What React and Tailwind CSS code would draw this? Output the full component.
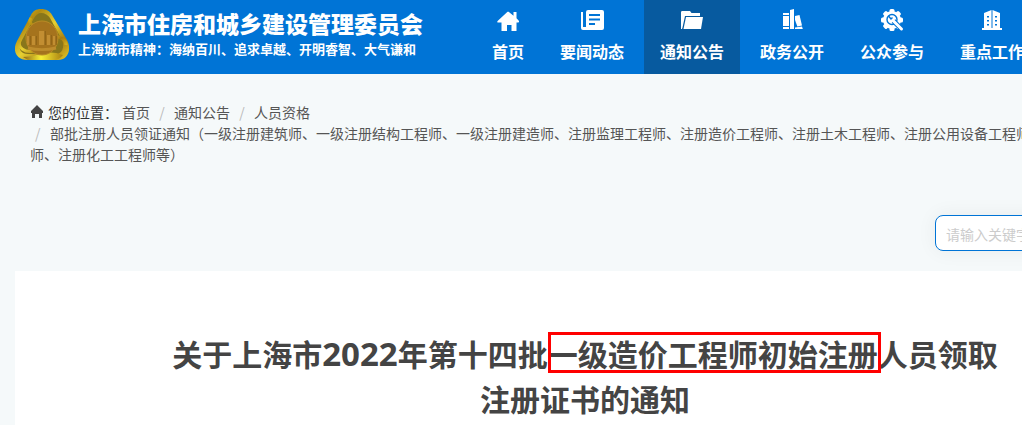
import React from "react";

const navItems = [
  { label: "首页", icon: HomeIcon },
  { label: "要闻动态", icon: NewsIcon },
  { label: "通知公告", icon: FolderIcon, active: true },
  { label: "政务公开", icon: BooksIcon },
  { label: "公众参与", icon: ServiceIcon },
  { label: "重点工作", icon: BuildingIcon },
];

const crumbs = ["首页", "通知公告", "人员资格"];

function HomeIcon() {
  return (
    <svg width="24" height="24" viewBox="0 0 24 24" fill="currentColor" aria-hidden="true">
      <path d="M17.500 3h3v6.200l2.300 2.600c.5.700.1 1.800-.8 1.800h-1.500V22h-5v-6H11v6H5.500v-8.400H2.200c-.9 0-1.300-1-.6-1.700L11 3.300c.7-.6 1.500-.6 2.200 0l4.300 3.500z" />
    </svg>
  );
}

function NewsIcon() {
  return (
    <svg width="24" height="24" viewBox="0 0 24 24" fill="currentColor" aria-hidden="true">
      <path d="M8 1h14a2 2 0 0 1 2 2v16a2 2 0 0 1-2 2H3a2 2 0 0 1-2-2V3h2v15h3V3a2 2 0 0 1 2-2zM9 5v2h11V5zm0 4.500v2h11v-2zM9 14v2h6v-2z" fillRule="evenodd" />
    </svg>
  );
}

function FolderIcon() {
  return (
    <svg width="24" height="24" viewBox="0 0 24 24" fill="currentColor" aria-hidden="true">
      <path d="M1 3.500C1 2.700 1.400 2 2.300 2H10l1.500 2H20v3H5L2.500 18.500 2 20H1z" />
      <path d="M6 8h17l-2 12H3.500z" />
    </svg>
  );
}

function BooksIcon() {
  return (
    <svg width="24" height="24" viewBox="0 0 24 24" fill="currentColor" aria-hidden="true">
      <path d="M3 4h6v2H3zM3 7h6v10H3zM3 18h6v2H3zM10 1l4-1v20h-4zM15 7l4.500-1L22 16.500l-7 1.500zM15 18.500l7-1 .8 2.500H15z" />
      <path d="M15 11l2.500 7H15z" fill="#0074d6" />
    </svg>
  );
}

function ServiceIcon() {
  return (
    <svg width="24" height="24" viewBox="0 0 24 24" aria-hidden="true">
      <g fill="currentColor">
        <circle cx="12" cy="11" r="9" />
        <rect x="9.500" y="0" width="5" height="22" rx="1.500" />
        <rect x="9.500" y="0" width="5" height="22" rx="1.500" transform="rotate(45 12 11)" />
        <rect x="9.500" y="0" width="5" height="22" rx="1.500" transform="rotate(90 12 11)" />
        <rect x="9.500" y="0" width="5" height="22" rx="1.500" transform="rotate(135 12 11)" />
      </g>
      <circle cx="12" cy="10.500" r="5" fill="none" stroke="#0074d6" strokeWidth="1.400" />
      <path d="m13.500 12 8.500 8.500" stroke="#0074d6" strokeWidth="5" />
      <path d="m13 11.500 8.500 8.500" stroke="currentColor" strokeWidth="3" strokeLinecap="round" />
      <path d="M8.500 7 11 10l1.500-1.500" fill="none" stroke="#0074d6" strokeWidth="1.400" />
    </svg>
  );
}

function BuildingIcon() {
  return (
    <svg width="24" height="24" viewBox="0 0 24 24" fill="currentColor" aria-hidden="true">
      <path d="M4 4l7.500-3v18H4zM12.500 1L20 4v15h-7.500zM2 19h20v2H2z" />
      <path d="M7 7h2v1.500H7zM7 11h2v1.500H7zM7 15h2v1.500H7zM15 7h2v1.500h-2zM15 11h2v1.500h-2zM15 15h2v1.500h-2z" fill="#0074d6" />
    </svg>
  );
}

function Emblem() {
  return (
    <svg width="54" height="52" viewBox="0 0 54 52" aria-hidden="true" className="shrink-0">
      <defs>
        <linearGradient id="gold" x1="0" y1="0" x2="1" y2="1">
          <stop offset="0" stopColor="#e3c51f" />
          <stop offset="0.25" stopColor="#b18a12" />
          <stop offset="0.5" stopColor="#e6d032" />
          <stop offset="0.75" stopColor="#a87b10" />
          <stop offset="1" stopColor="#e8d02a" />
        </linearGradient>
        <linearGradient id="base" x1="0" y1="0" x2="1" y2="0">
          <stop offset="0" stopColor="#8d6414" />
          <stop offset="0.45" stopColor="#f7ee35" />
          <stop offset="1" stopColor="#a97f10" />
        </linearGradient>
      </defs>
      <path d="M26 0c5 0 9 2 11 6l15 25c5 9 1 20-9 20H12C1 51-3 41 2 32L16 6c2-4 5-6 10-6z" fill="url(#gold)" />
      <path d="M26 4c4 0 7 2 9 5l12 22c3 7 0 14-6 14H13c-8 0-10-6-7-12L19 9c2-3 4-5 7-5z" fill="#88761b" />
      <path d="M16 9c-3 5 1 9 8 5M39 27c6 1 12 3 12 9M5 31c-3 8 5 13 14 11" fill="none" stroke="url(#gold)" strokeWidth="3" />
      <path d="M8 48c8 0 16-3 22-4s10-1 18 2c-3 4-6 5-11 5H13z" fill="url(#base)" />
      <ellipse cx="27" cy="29" rx="16" ry="17" fill="#a5731d" stroke="#b98b25" strokeWidth="1" />
      <path d="M12 27h3v9h-3zM17 27h4v9h-4zM24 22h6v14h-6zM32 26h4v10h-4zM38 27h3v9h-3z" fill="#c28e32" />
      <path d="M15 27v9M21 27v9M30 22v14M36 26v10M41 27v9" stroke="#805810" strokeWidth="1" />
      <path d="M13 39c8 2 20 2 28 0" fill="none" stroke="#bd8c2d" strokeWidth="3" />
    </svg>
  );
}

function Header() {
  return (
    <header className="flex h-[74px] bg-[#0074d6] text-white">
      <a href="#" className="flex items-center gap-[9px] w-[476px] shrink-0 pl-[15px] pb-1">
        <Emblem />
        <span className="flex flex-col gap-1 pb-1">
          <span className="text-[23px] leading-7 font-black">
            上海市住房和城乡建设管理委员会
          </span>
          <span className="text-[13px] leading-4 font-bold">
            上海城市精神：海纳百川、追求卓越、开明睿智、大气谦和
          </span>
        </span>
      </a>
      <nav className="flex gap-1">
        {navItems.map(({ label, icon: Icon, active }) => (
          <a
            key={label}
            href="#"
            className={`flex flex-col items-center shrink-0 px-4 pt-[9px] ${
              active ? "bg-[#075a9f]" : ""
            }`}
          >
            <Icon />
            <span className="mt-[6px] text-base leading-6 font-bold whitespace-nowrap">
              {label}
            </span>
          </a>
        ))}
      </nav>
    </header>
  );
}

function Breadcrumb() {
  return (
    <div className="px-[15px] text-sm leading-[21px] text-[#555]">
      <div className="flex items-center">
        <svg width="14" height="14" viewBox="0 0 14 14" fill="#444" className="mr-1 mb-[2px]" aria-hidden="true">
          <path d="M7 0l6 6v2h-1v5H9V9H5v4H2V8H1V6z" />
        </svg>
        <span className="mr-1 text-[#333]">您的位置：</span>
        {crumbs.map((crumb, i) => (
          <React.Fragment key={crumb}>
            {i > 0 && <span className="w-6 text-center text-[#bbb]">/</span>}
            <a href="#">{crumb}</a>
          </React.Fragment>
        ))}
      </div>
      <p>
        <span className="inline-block w-5 pl-[5px] text-[#bbb]">/</span>
        部批注册人员领证通知（一级注册建筑师、一级注册结构工程师、一级注册建造师、注册监理工程师、注册造价工程师、注册土木工程师、注册公用设备工程师、注册电气工程师、注册化工工程师等）
      </p>
    </div>
  );
}

export default function App() {
  return (
    <div className="min-h-screen flex flex-col overflow-hidden bg-[#f5f9fa] font-['Noto_Sans_CJK_SC',sans-serif]">
      <Header />
      <main className="flex flex-col flex-1 min-w-[1170px] px-[15px] pt-7">
        <Breadcrumb />
        <form className="flex justify-end mt-[50px] mb-5">
          <input
            type="text"
            aria-label="请输入关键字"
            placeholder="请输入关键字"
            className="w-[220px] h-9 px-[10px] pt-[2px] text-sm bg-white border border-[#0074d6] rounded-lg shadow-[0_0_20px_rgba(0,0,0,0.06)] placeholder:text-[#ccc] focus:outline-none"
          />
        </form>
        <article className="flex-1 bg-white pt-[60px]">
          <h1 className="text-center text-[30px] leading-[45px] font-bold text-[#444]">
            关于上海市
            <span className="font-['Noto_Sans'] text-[33px] leading-none">2022</span>
            年第十四批
            <span className="relative inline-block">
              一级造价工程师初始注册
              <span className="absolute top-px bottom-[3px] left-0 -right-[3px] border-3 border-[#f00]" />
            </span>
            人员领取
            <br />
            注册证书的通知
          </h1>
        </article>
      </main>
    </div>
  );
}
